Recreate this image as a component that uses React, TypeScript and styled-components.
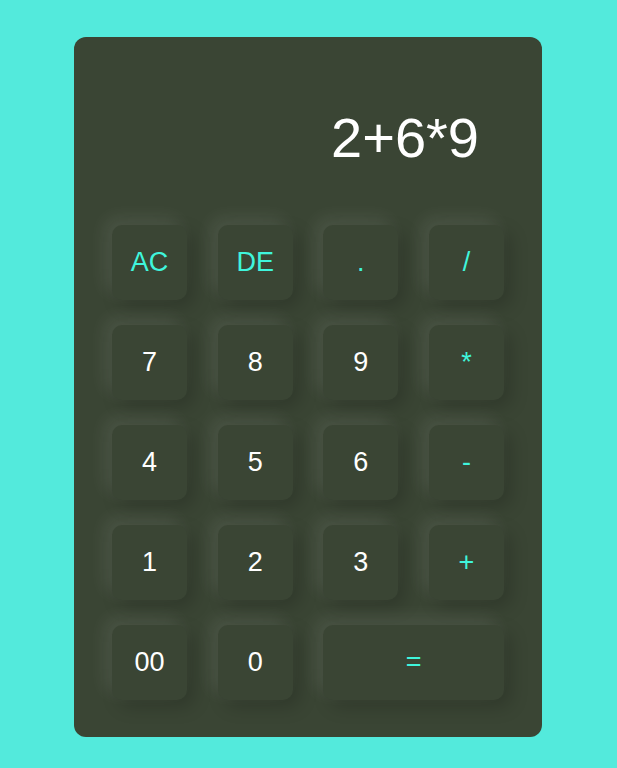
import React from "react";
import styled, { createGlobalStyle } from "styled-components";

const GlobalStyle = createGlobalStyle`
  html, body {
    margin: 0;
    padding: 0;
    background: #53eadc;
    font-family: "Liberation Sans", Arial, sans-serif;
  }
`;

const Page = styled.div`
  display: flex;
  justify-content: flex-start;
  padding: 37px 0 0 74px;
  min-height: 768px;
  box-sizing: border-box;
`;

const Calculator = styled.div`
  width: 468px;
  height: 700px;
  box-sizing: border-box;
  background: #3a4534;
  border-radius: 12px;
  padding: 0 38px 37px;
  display: flex;
  flex-direction: column;
`;

const Display = styled.div`
  height: 188px;
  box-sizing: border-box;
  padding: 73px 25px 0 0;
  text-align: right;
  color: #ffffff;
  font-size: 56px;
  line-height: 56px;
`;

const Keys = styled.div`
  display: grid;
  grid-template-columns: repeat(4, 75px);
  grid-auto-rows: 75px;
  justify-content: space-between;
  row-gap: 25px;
`;

const Key = styled.button<{ $accent?: boolean; $wide?: boolean }>`
  border: none;
  outline: none;
  margin: 0;
  padding: 0;
  border-radius: 10px;
  background: #3a4534;
  color: ${(p) => (p.$accent ? "#3ff5dc" : "#ffffff")};
  font-family: "Liberation Sans", Arial, sans-serif;
  font-size: 27px;
  display: flex;
  align-items: center;
  justify-content: center;
  box-shadow: -7px -7px 18px rgba(255, 255, 255, 0.09),
    7px 7px 18px rgba(0, 0, 0, 0.18);
  grid-column: ${(p) => (p.$wide ? "span 2" : "auto")};
  cursor: pointer;
`;

const keys: { label: string; accent?: boolean; wide?: boolean }[] = [
  { label: "AC", accent: true },
  { label: "DE", accent: true },
  { label: ".", accent: true },
  { label: "/", accent: true },
  { label: "7" },
  { label: "8" },
  { label: "9" },
  { label: "*", accent: true },
  { label: "4" },
  { label: "5" },
  { label: "6" },
  { label: "-", accent: true },
  { label: "1" },
  { label: "2" },
  { label: "3" },
  { label: "+", accent: true },
  { label: "00" },
  { label: "0" },
  { label: "=", accent: true, wide: true },
];

export default function App() {
  return (
    <>
      <GlobalStyle />
      <Page>
        <Calculator>
          <Display>2+6*9</Display>
          <Keys>
            {keys.map((k) => (
              <Key key={k.label} $accent={k.accent} $wide={k.wide}>
                {k.label}
              </Key>
            ))}
          </Keys>
        </Calculator>
      </Page>
    </>
  );
}
